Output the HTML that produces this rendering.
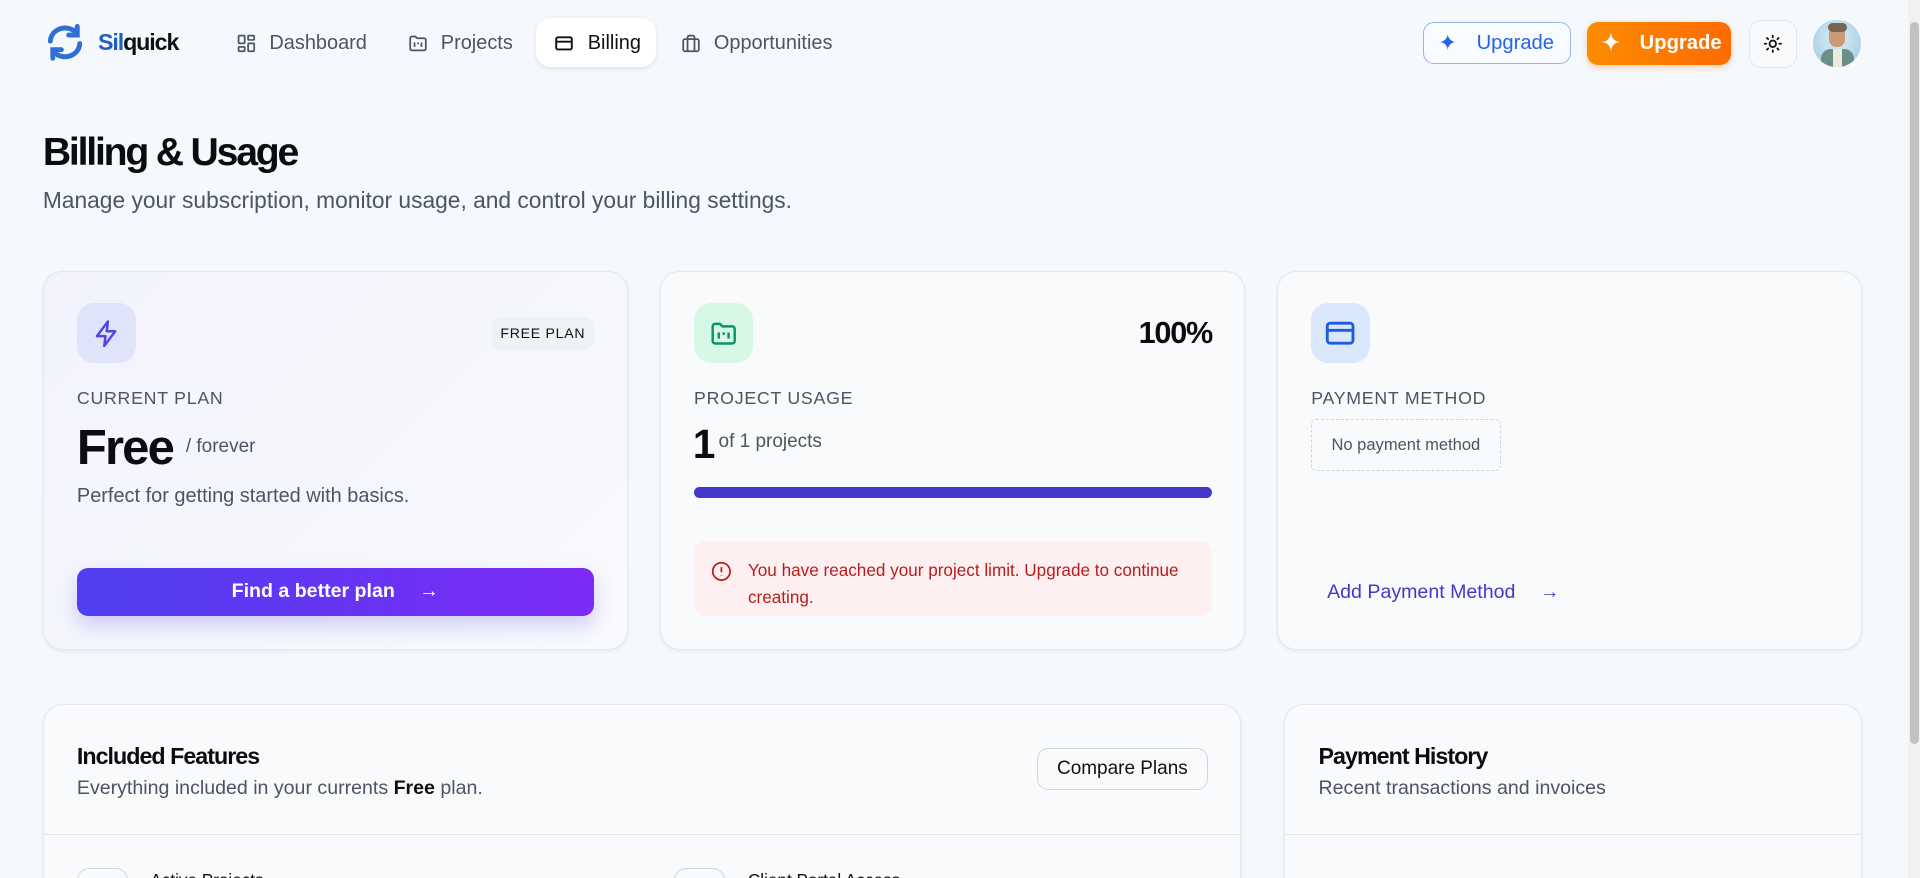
<!DOCTYPE html>
<html><head><meta charset="utf-8"><style>
html,body{margin:0;padding:0;overflow:hidden;background:#f5f8fc;width:1920px;height:878px}
#w{position:relative;width:1568px;height:717px;zoom:1.2244898;font-family:"Liberation Sans",sans-serif;color:#111827;overflow:hidden;background:#f5f8fc}
.a{position:absolute}
.nav{font-size:16.3px;color:#4b5563;display:flex;align-items:center;gap:10px}
.card{position:absolute;background:#f8fafc;border:1px solid #e5e7eb;border-radius:16px;box-shadow:0 1px 3px rgba(0,0,0,.06)}
.lbl{font-size:14.5px;letter-spacing:.6px;color:#4b5563;font-weight:500}
.ib{position:absolute;width:48px;height:49px;border-radius:14px;display:flex;align-items:center;justify-content:center}
.h{font-weight:bold;letter-spacing:-1px}
</style></head><body><div id="w">
<svg class="a" style="left:35px;top:20px" width="36" height="30" viewBox="0 0 36 30" fill="none" stroke="#2f6fd6" stroke-width="4" stroke-linecap="round"><path d="M6 14a12 11 0 0 1 21-7"/><path d="M30 16a12 11 0 0 1-21 7"/><path d="M28 2v7h-7" /><path d="M8 28v-7h7"/></svg>
<div class="a h" style="left:80px;top:24px;font-size:19px;color:#1f5fbf;letter-spacing:-.9px">Sil<span style="color:#111">quick</span></div>
<div class="a nav" style="left:193px;top:26px"><svg width="17" height="17" viewBox="0 0 24 24" fill="none" stroke="#4b5563" stroke-width="2"><rect x="3" y="3" width="7" height="9" rx="1"/><rect x="14" y="3" width="7" height="5" rx="1"/><rect x="14" y="12" width="7" height="9" rx="1"/><rect x="3" y="16" width="7" height="5" rx="1"/></svg>Dashboard</div>
<div class="a nav" style="left:332px;top:26px"><svg width="18" height="17" viewBox="0 0 24 24" fill="none" stroke="#4b5563" stroke-width="2"><path d="M3 6a2 2 0 0 1 2-2h4l2 2h8a2 2 0 0 1 2 2v10a2 2 0 0 1-2 2H5a2 2 0 0 1-2-2z"/><path d="M8 11v5M12 11v2M16 11v5"/></svg>Projects</div>
<div class="a" style="left:438px;top:15px;width:98px;height:40px;background:#fff;border-radius:12px;box-shadow:0 1px 4px rgba(0,0,0,.1)"></div>
<div class="a nav" style="left:452px;top:26px;color:#111"><svg width="18" height="17" viewBox="0 0 24 24" fill="none" stroke="#111" stroke-width="2.2"><rect x="3" y="5" width="18" height="14" rx="2"/><path d="M3 10h18"/></svg>Billing</div>
<div class="a nav" style="left:555px;top:26px"><svg width="18" height="17" viewBox="0 0 24 24" fill="none" stroke="#4b5563" stroke-width="2"><rect x="3" y="7" width="18" height="14" rx="2"/><path d="M8 21V5a2 2 0 0 1 2-2h4a2 2 0 0 1 2 2v16"/></svg>Opportunities</div>
<div class="a" style="left:1162px;top:18px;width:119px;height:33px;border:1px solid #93b4f0;border-radius:9px;background:#f8fbff;display:flex;align-items:center;color:#2563eb;font-size:16.5px;font-weight:500"><span style="margin-left:12px;font-size:18px">✦</span><span style="margin-left:16px">Upgrade</span></div>
<div class="a" style="left:1296px;top:18px;width:118px;height:35px;border-radius:9px;background:linear-gradient(90deg,#fb8c00,#ff6a00);display:flex;align-items:center;color:#fff;font-size:16.5px;font-weight:bold;box-shadow:0 2px 5px rgba(255,120,0,.3)"><span style="margin-left:12px;font-size:18px">✦</span><span style="margin-left:16px">Upgrade</span></div>
<div class="a" style="left:1428px;top:16px;width:38px;height:38px;border:1px solid #e2e8f0;border-radius:10px;background:#f8fafc;display:flex;align-items:center;justify-content:center"><svg width="16" height="16" viewBox="0 0 24 24" fill="none" stroke="#111" stroke-width="2.2" stroke-linecap="round"><circle cx="12" cy="12" r="4"/><path d="M12 2v2M12 20v2M2 12h2M20 12h2M4.9 4.9l1.4 1.4M17.7 17.7l1.4 1.4M4.9 19.1l1.4-1.4M17.7 6.3l1.4-1.4"/></svg></div>
<div class="a" style="left:1481px;top:16px;width:39px;height:39px;border-radius:50%;background:radial-gradient(circle at 50% 40%,#d9eef7,#9cc9e0);overflow:hidden"><div class="a" style="left:13px;top:6px;width:13px;height:16px;border-radius:6px;background:#c99a73"></div><div class="a" style="left:12px;top:3px;width:15px;height:7px;border-radius:6px;background:#7a6350"></div><div class="a" style="left:6px;top:24px;width:27px;height:18px;border-radius:8px 8px 0 0;background:#6b8f86"></div><div class="a" style="left:16px;top:24px;width:7px;height:16px;background:#efe8dc"></div></div>
<div class="a" style="left:1558px;top:0;width:10px;height:717px;background:#f1f1f1"></div>
<div class="a" style="left:1560px;top:18px;width:7px;height:590px;border-radius:4px;background:#c1c1c1"></div>
<div class="a h" style="left:35px;top:107px;font-size:32px;letter-spacing:-1.8px;color:#0b0b12">Billing &amp; Usage</div>
<div class="a" style="left:35px;top:153px;font-size:18.6px;color:#4b5563">Manage your subscription, monitor usage, and control your billing settings.</div>
<div class="card" style="left:35px;top:221px;width:476px;height:308px;background:linear-gradient(135deg,#f2f3fd,#f8fafc)">
<div class="ib" style="left:27px;top:26px;background:#e0e4fb"><svg width="24" height="24" viewBox="0 0 24 24" fill="none" stroke="#4f46e5" stroke-width="2" stroke-linejoin="round"><path d="M13 2L4 14h7l-1 8 9-12h-7z"/></svg></div>
<div class="a" style="left:366px;top:37px;width:83px;height:27px;border-radius:8px;background:#eef1f6;font-size:11.5px;letter-spacing:.6px;color:#111;display:flex;align-items:center;justify-content:center">FREE PLAN</div>
<div class="a lbl" style="left:27px;top:95px">CURRENT PLAN</div>
<div class="a h" style="left:27px;top:121px;font-size:40px;letter-spacing:-1.5px;color:#0b0b12">Free</div>
<div class="a" style="left:116px;top:134px;font-size:15.5px;color:#4b5563">/ forever</div>
<div class="a" style="left:27px;top:174px;font-size:16.3px;color:#4b5563">Perfect for getting started with basics.</div>
<div class="a" style="left:27px;top:242px;width:422px;height:39px;border-radius:9px;background:linear-gradient(90deg,#4f3ff0,#7c2bf5);box-shadow:0 8px 16px rgba(100,80,240,.25);color:#fff;font-size:16px;font-weight:bold;display:flex;align-items:center;justify-content:center">Find a better plan<span style="margin-left:20px;font-weight:normal">→</span></div>
</div>
<div class="card" style="left:539px;top:221px;width:476px;height:308px">
<div class="ib" style="left:27px;top:26px;background:#d8f8e6"><svg width="24" height="24" viewBox="0 0 24 24" fill="none" stroke="#059669" stroke-width="2"><path d="M3 6a2 2 0 0 1 2-2h4l2 2h8a2 2 0 0 1 2 2v10a2 2 0 0 1-2 2H5a2 2 0 0 1-2-2z"/><path d="M8 11v5M12 11v2M16 11v5"/></svg></div>
<div class="a h" style="right:26px;top:36px;font-size:25px;color:#0b0b12">100%</div>
<div class="a lbl" style="left:27px;top:95px">PROJECT USAGE</div>
<div class="a h" style="left:26px;top:122px;font-size:33px;color:#0b0b12">1</div>
<div class="a" style="left:47px;top:130px;font-size:15.5px;color:#4b5563">of 1 projects</div>
<div class="a" style="left:27px;top:176px;width:423px;height:9px;border-radius:5px;background:#4338ca"></div>
<div class="a" style="left:27px;top:220px;width:423px;height:61px;border-radius:10px;background:#fef0f0"></div>
<svg class="a" style="left:41px;top:236px" width="17" height="17" viewBox="0 0 24 24" fill="none" stroke="#b91c1c" stroke-width="2"><circle cx="12" cy="12" r="10"/><path d="M12 7v6M12 16.5v.5"/></svg>
<div class="a" style="left:71px;top:233px;width:370px;font-size:14px;line-height:22px;color:#b91c1c">You have reached your project limit. Upgrade to continue creating.</div>
</div>
<div class="card" style="left:1043px;top:221px;width:476px;height:308px">
<div class="ib" style="left:27px;top:26px;background:#dbe8fc"><svg width="28" height="28" viewBox="0 0 24 24" fill="none" stroke="#1d5be0" stroke-width="2"><rect x="3" y="5" width="18" height="14" rx="2"/><path d="M3 10h18"/></svg></div>
<div class="a lbl" style="left:27px;top:95px">PAYMENT METHOD</div>
<div class="a" style="left:27px;top:120px;width:153px;height:41px;border:1px dashed #d1d5db;border-radius:4px;font-size:13.5px;color:#4b5563;display:flex;align-items:center;justify-content:center">No payment method</div>
<div class="a" style="left:40px;top:253px;font-size:16px;color:#4338ca;font-weight:500">Add Payment Method<span style="margin-left:20px">→</span></div>
</div>
<div class="card" style="left:35px;top:575px;width:977px;height:160px;border-radius:16px">
<div class="a h" style="left:27px;top:31px;font-size:19px;letter-spacing:-.8px;color:#0b0b12">Included Features</div>
<div class="a" style="left:27px;top:59px;font-size:16px;color:#4b5563">Everything included in your currents <b style="color:#111">Free</b> plan.</div>
<div class="a" style="left:811px;top:35px;width:138px;height:33px;border:1px solid #d1d5db;border-radius:9px;background:#f8fafc;font-size:15.5px;color:#111;display:flex;align-items:center;justify-content:center">Compare Plans</div>
<div class="a" style="left:0;top:105px;width:977px;height:1px;background:#e5e7eb"></div>
<div class="a" style="left:27px;top:133px;width:40px;height:40px;border:1px solid #d1d5db;border-radius:10px"></div>
<div class="a" style="left:87px;top:135px;font-size:14px;color:#111">Active Projects</div>
<div class="a" style="left:515px;top:133px;width:40px;height:40px;border:1px solid #d1d5db;border-radius:10px"></div>
<div class="a" style="left:575px;top:135px;font-size:14px;color:#111">Client Portal Access</div>
</div>
<div class="card" style="left:1049px;top:575px;width:470px;height:160px">
<div class="a h" style="left:27px;top:31px;font-size:19px;letter-spacing:-.8px;color:#0b0b12">Payment History</div>
<div class="a" style="left:27px;top:59px;font-size:16px;color:#4b5563">Recent transactions and invoices</div>
<div class="a" style="left:0;top:105px;width:470px;height:1px;background:#e5e7eb"></div>
</div>
</div></body></html>
